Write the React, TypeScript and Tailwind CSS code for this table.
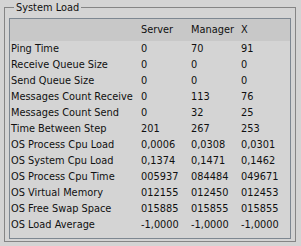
import React from 'react';

type Row = { label: string; server: string; manager: string; x: string };

const rows: Row[] = [
  { label: 'Ping Time', server: '0', manager: '70', x: '91' },
  { label: 'Receive Queue Size', server: '0', manager: '0', x: '0' },
  { label: 'Send Queue Size', server: '0', manager: '0', x: '0' },
  { label: 'Messages Count Receive', server: '0', manager: '113', x: '76' },
  { label: 'Messages Count Send', server: '0', manager: '32', x: '25' },
  { label: 'Time Between Step', server: '201', manager: '267', x: '253' },
  { label: 'OS Process Cpu Load', server: '0,0006', manager: '0,0308', x: '0,0301' },
  { label: 'OS System Cpu Load', server: '0,1374', manager: '0,1471', x: '0,1462' },
  { label: 'OS Process Cpu Time', server: '005937', manager: '084484', x: '049671' },
  { label: 'OS Virtual Memory', server: '012155', manager: '012450', x: '012453' },
  { label: 'OS Free Swap Space', server: '015885', manager: '015855', x: '015855' },
  { label: 'OS Load Average', server: '-1,0000', manager: '-1,0000', x: '-1,0000' },
];

const App: React.FC = () => {
  return (
    <div className="w-[301px] h-[246px] bg-[#d4d4d4] text-[#101010] text-[9.8px] [font-family:'DejaVu_Sans',Verdana,sans-serif] overflow-hidden">
      <fieldset className="ml-[4px] w-[292px] h-[242px] border border-[#858585] px-[4px] pb-[2px]">
        <legend className="ml-[5px] px-[2px] leading-[15px]">System Load</legend>

        <div className="mt-[3px] h-[221px] border border-[#7d8791]">
          {/* header */}
          <div className="grid grid-cols-[130px_50px_50px_1fr] h-[22px] items-center bg-[#c8c8c8] pl-[1px]">
            <span />
            <span>Server</span>
            <span>Manager</span>
            <span>X</span>
          </div>

          {rows.map(r => (
            <div key={r.label} className="grid grid-cols-[130px_50px_50px_1fr] h-[16px] items-center pl-[1px] whitespace-nowrap">
              <span>{r.label}</span>
              <span>{r.server}</span>
              <span>{r.manager}</span>
              <span>{r.x}</span>
            </div>
          ))}
        </div>
      </fieldset>
    </div>
  );
};

export default App;
